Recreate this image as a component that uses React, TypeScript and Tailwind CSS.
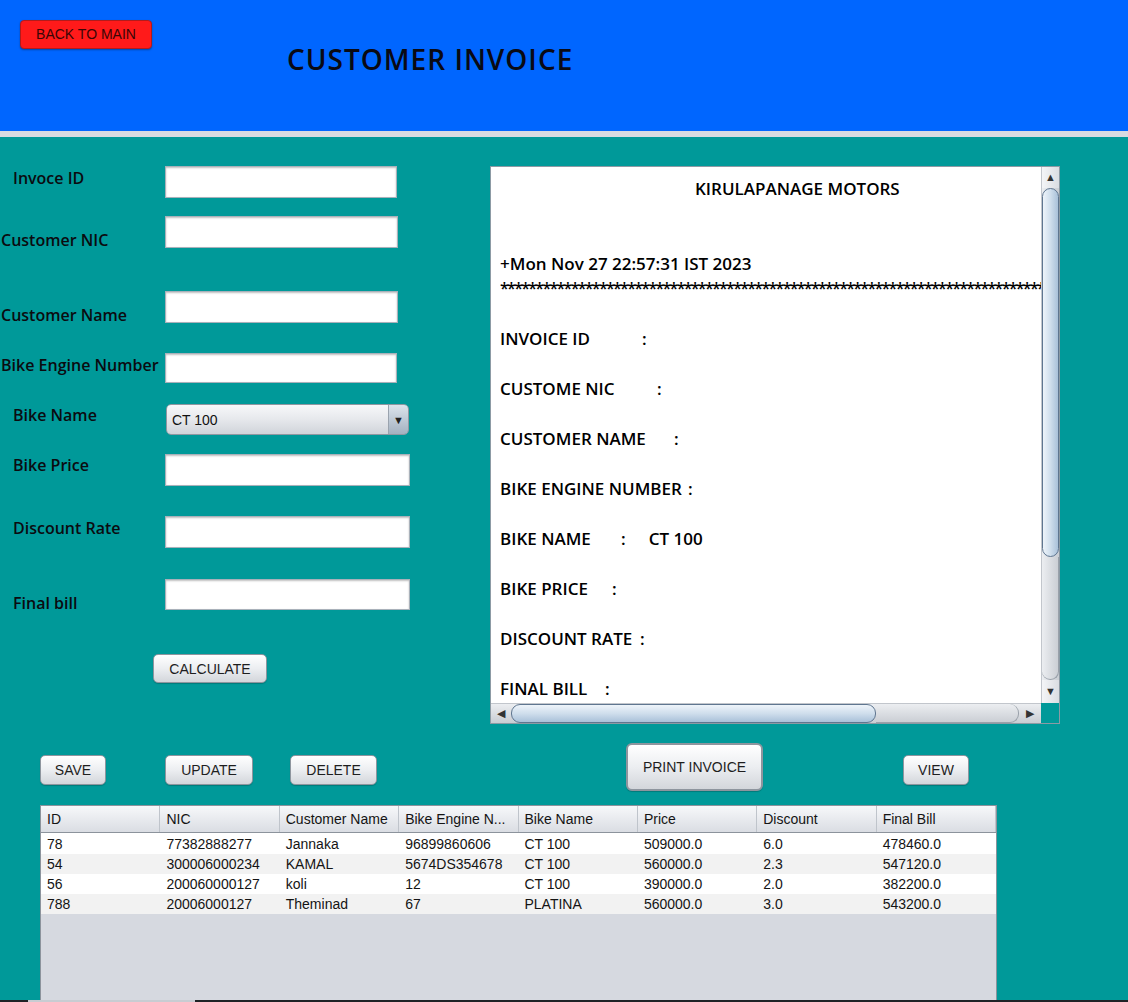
import React from 'react';

const arial = "font-['Liberation_Sans',Arial,sans-serif]";

const tableRows = [
  ['78', '77382888277', 'Jannaka', '96899860606', 'CT 100', '509000.0', '6.0', '478460.0'],
  ['54', '300006000234', 'KAMAL', '5674DS354678', 'CT 100', '560000.0', '2.3', '547120.0'],
  ['56', '200060000127', 'koli', '12', 'CT 100', '390000.0', '2.0', '382200.0'],
  ['788', '20006000127', 'Theminad', '67', 'PLATINA', '560000.0', '3.0', '543200.0'],
];

const headers = ['ID', 'NIC', 'Customer Name', 'Bike Engine N...', 'Bike Name', 'Price', 'Discount', 'Final Bill'];

function Field({ className }: { className: string }) {
  return <div className={`bg-white border border-[#a9b1ba] shadow-[inset_0_1px_2px_rgba(0,0,0,0.25)] ${className}`} />;
}

function Button({ label, className }: { label: string; className: string }) {
  return (
    <div
      className={`${arial} flex items-center justify-center rounded-[5px] border border-[#8e959e] bg-linear-to-b from-[#ffffff] via-[#eceef1] to-[#d3d6db] text-[14px] text-[#1e1e1e] shadow-[0_1px_1px_rgba(0,0,0,0.2)] ${className}`}
    >
      {label}
    </div>
  );
}

function Row({ label, width, after }: { label: string; width: string; after?: string }) {
  return (
    <div className="h-[25px] whitespace-nowrap">
      <span className={`inline-block ${width}`}>{label}</span>:
      {after && <span className="ml-[23px]">{after}</span>}
    </div>
  );
}

export default function App() {
  return (
    <div className="w-[1128px] h-[1002px] overflow-hidden bg-[#009999] font-['Open_Sans',sans-serif] flex flex-col">
      {/* header */}
      <div className="h-[131px] shrink-0 bg-[#0066ff] flex items-start">
        <div
          className={`${arial} ml-[20px] mt-[20px] w-[132px] h-[29px] rounded-[4px] border border-[#b31b1b] bg-[#ff1a1a] text-[14px] text-[#3a0606] flex items-center justify-center shadow-[0_1px_2px_rgba(0,0,0,0.35)]`}
        >
          BACK TO MAIN
        </div>
        <div className="ml-[135px] mt-[45px] text-[28px] leading-[28px] font-semibold tracking-[1px] text-[#0a0a14]">
          CUSTOMER INVOICE
        </div>
      </div>
      <div className="h-[6px] shrink-0 bg-[#d7dbe1]" />

      {/* form + text area */}
      <div className="flex shrink-0">
        <div className="w-[490px] pt-[29px] text-[16px] leading-[22px] font-semibold text-[#0b0b10]">
          <div className="flex h-[32px]">
            <div className="w-[165px] pl-[13px] pt-[1px]">Invoce ID</div>
            <Field className="w-[232px] h-[32px]" />
          </div>
          <div className="flex h-[32px] mt-[18px]">
            <div className="w-[165px] pl-[1px] pt-[13px]">Customer NIC</div>
            <Field className="w-[233px] h-[32px]" />
          </div>
          <div className="flex h-[32px] mt-[43px]">
            <div className="w-[165px] pl-[1px] pt-[13px] whitespace-nowrap">Customer Name</div>
            <Field className="w-[233px] h-[32px]" />
          </div>
          <div className="flex h-[30px] mt-[30px]">
            <div className="w-[165px] pl-[1px] pt-[1px] whitespace-nowrap">Bike Engine Number</div>
            <Field className="w-[232px] h-[30px]" />
          </div>
          <div className="flex h-[31px] mt-[21px]">
            <div className="w-[166px] pl-[13px]">Bike Name</div>
            <div className={`${arial} w-[243px] h-[31px] flex rounded-[5px] border border-[#9097a1] overflow-hidden font-normal text-[14px] text-[#111]`}>
              <div className="flex-1 flex items-center pl-[5px] bg-linear-to-b from-[#f7f8fa] via-[#e6e8ec] to-[#d0d4da]">CT 100</div>
              <div className="w-[20px] border-l border-[#9aa3ae] bg-linear-to-b from-[#dde4ec] via-[#bfcad6] to-[#a4b1c0] flex items-center justify-center text-[11px] text-[#222]">
                ▼
              </div>
            </div>
          </div>
          <div className="flex h-[32px] mt-[19px]">
            <div className="w-[165px] pl-[13px]">Bike Price</div>
            <Field className="w-[245px] h-[32px]" />
          </div>
          <div className="flex h-[32px] mt-[30px]">
            <div className="w-[165px] pl-[13px] pt-[1px]">Discount Rate</div>
            <Field className="w-[245px] h-[32px]" />
          </div>
          <div className="flex h-[31px] mt-[31px]">
            <div className="w-[165px] pl-[13px] pt-[13px] h-[31px]">Final bill</div>
            <Field className="w-[245px] h-[31px]" />
          </div>
          <div className="mt-[44px] pl-[153px]">
            <Button label="CALCULATE" className="w-[114px] h-[29px] font-normal" />
          </div>
        </div>

        {/* invoice text area */}
        <div className="mt-[29px] w-[570px] h-[558px] border border-[#8c9aa4] flex flex-col">
          <div className="flex h-[536px]">
            <div className="flex-1 bg-white overflow-hidden pt-[9px] pl-[9px] text-[17px] leading-[25px] font-semibold text-black">
              <div className="h-[25px] pl-[195px] whitespace-nowrap">KIRULAPANAGE MOTORS</div>
              <div className="h-[25px]" />
              <div className="h-[25px]" />
              <div className="h-[25px] whitespace-nowrap">+Mon Nov 27 22:57:31 IST 2023</div>
              <div className="h-[25px] whitespace-nowrap tracking-[-1.7px] text-[16px]">{'*'.repeat(100)}</div>
              <div className="h-[25px]" />
              <Row label="INVOICE ID" width="w-[142px]" />
              <div className="h-[25px]" />
              <Row label="CUSTOME NIC" width="w-[157px]" />
              <div className="h-[25px]" />
              <Row label="CUSTOMER NAME" width="w-[174px]" />
              <div className="h-[25px]" />
              <Row label="BIKE ENGINE NUMBER" width="w-[188px]" />
              <div className="h-[25px]" />
              <Row label="BIKE NAME" width="w-[121px]" after="CT 100" />
              <div className="h-[25px]" />
              <Row label="BIKE PRICE" width="w-[112px]" />
              <div className="h-[25px]" />
              <Row label="DISCOUNT RATE" width="w-[140px]" />
              <div className="h-[25px]" />
              <Row label="FINAL BILL" width="w-[105px]" />
            </div>
            {/* vertical scrollbar */}
            <div className="w-[18px] flex flex-col bg-linear-to-r from-[#eceef1] to-[#c9cdd3] border-l border-[#c2c6cc]">
              <div className="h-[21px] flex items-center justify-center text-[11px] text-[#333] bg-linear-to-r from-[#f4f5f7] to-[#dadde2]">▲</div>
              <div className="h-[369px] rounded-[9px] border border-[#5f7690] bg-linear-to-r from-[#eef4fa] via-[#cfdeec] to-[#a9c1d9]" />
              <div className="flex-1 rounded-b-[9px] border-b border-r border-[#9aa1aa]" />
              <div className="h-[23px] flex items-center justify-center text-[11px] text-[#333] bg-linear-to-r from-[#f4f5f7] to-[#dadde2]">▼</div>
            </div>
          </div>
          <div className="flex h-[20px]">
            {/* horizontal scrollbar */}
            <div className="flex-1 flex bg-linear-to-b from-[#eceef1] to-[#c9cdd3] border-t border-[#c2c6cc]">
              <div className="w-[20px] flex items-center justify-center text-[11px] text-[#333]">◀</div>
              <div className="w-[365px] rounded-[9px] border border-[#5f7690] bg-linear-to-b from-[#eef4fa] via-[#cfdeec] to-[#a9c1d9]" />
              <div className="flex-1 rounded-r-[9px] border-r border-b border-[#9aa1aa]" />
              <div className="w-[22px] flex items-center justify-center text-[11px] text-[#333]">▶</div>
            </div>
            <div className="w-[18px] bg-[#009999]" />
          </div>
        </div>
      </div>

      {/* buttons */}
      <div className="flex items-start h-[48px] mt-[19px] shrink-0">
        <Button label="SAVE" className="ml-[40px] mt-[12px] w-[66px] h-[30px]" />
        <Button label="UPDATE" className="ml-[59px] mt-[12px] w-[88px] h-[30px]" />
        <Button label="DELETE" className="ml-[37px] mt-[12px] w-[87px] h-[30px]" />
        <Button
          label="PRINT INVOICE"
          className="ml-[249px] w-[137px] h-[48px] border-2 border-[#6f93ba] rounded-[6px]"
        />
        <Button label="VIEW" className="ml-[140px] mt-[12px] w-[66px] h-[30px]" />
      </div>

      {/* table */}
      <div className={`${arial} ml-[40px] mt-[14px] w-[957px] flex-1 flex flex-col border-x border-t border-[#8c939c] bg-[#d6d9e0] text-[14px] text-[#141414]`}>
        <div className="grid grid-cols-8 h-[27px] border-b border-[#8c939c] bg-linear-to-b from-[#f7f8fa] to-[#dadde3]">
          {headers.map((h) => (
            <div key={h} className="flex items-center pl-[6px] border-r border-[#bfc4cb] whitespace-nowrap overflow-hidden">
              {h}
            </div>
          ))}
        </div>
        <div className="h-[1px] bg-white" />
        {tableRows.map((r, i) => (
          <div key={i} className={`grid grid-cols-8 h-[20px] ${i % 2 === 0 ? 'bg-white' : 'bg-[#f2f2f2]'}`}>
            {r.map((c, j) => (
              <div key={j} className="pl-[6px] leading-[20px] whitespace-nowrap overflow-hidden">
                {c}
              </div>
            ))}
          </div>
        ))}
      </div>
      <div className="h-[2px] shrink-0 flex bg-[#1f2226]">
        <div className="ml-[28px] w-[167px] bg-[#c8ccd2]" />
      </div>
    </div>
  );
}
